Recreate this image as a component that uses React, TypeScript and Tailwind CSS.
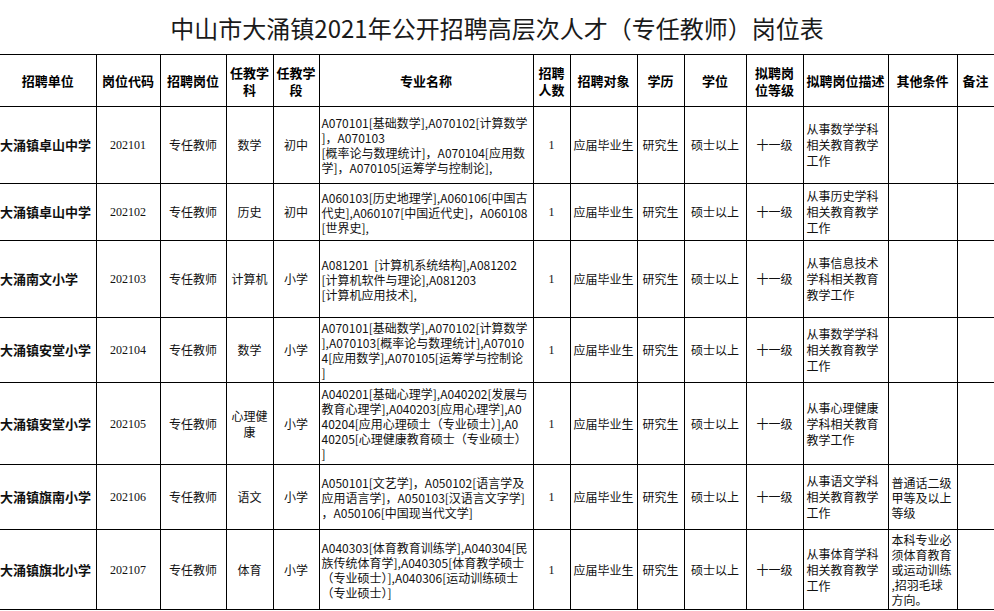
import React from 'react';

type Row = {
  unit: string;
  code: string;
  subject: string[];
  stage: string;
  major: string[];
  desc: string[];
  other?: string[];
  h: string;
};

const rows: Row[] = [
  {
    unit: '大涌镇卓山中学',
    code: '202101',
    subject: ['数学'],
    stage: '初中',
    major: [
      'A070101[基础数学],A070102[计算数学',
      ']，A070103',
      '[概率论与数理统计]，A070104[应用数',
      '学]，A070105[运筹学与控制论],',
    ],
    desc: ['从事数学学科', '相关教育教学', '工作'],
    h: 'h-[77px]',
  },
  {
    unit: '大涌镇卓山中学',
    code: '202102',
    subject: ['历史'],
    stage: '初中',
    major: ['A060103[历史地理学],A060106[中国古', '代史],A060107[中国近代史]，A060108', '[世界史],'],
    desc: ['从事历史学科', '相关教育教学', '工作'],
    h: 'h-[57px]',
  },
  {
    unit: '大涌南文小学',
    code: '202103',
    subject: ['计算机'],
    stage: '小学',
    major: ['A081201  [计算机系统结构],A081202', '[计算机软件与理论],A081203', '[计算机应用技术],'],
    desc: ['从事信息技术', '学科相关教育', '教学工作'],
    h: 'h-[77px]',
  },
  {
    unit: '大涌镇安堂小学',
    code: '202104',
    subject: ['数学'],
    stage: '小学',
    major: [
      'A070101[基础数学],A070102[计算数学',
      '],A070103[概率论与数理统计],A07010',
      '4[应用数学],A070105[运筹学与控制论',
      ']',
    ],
    desc: ['从事数学学科', '相关教育教学', '工作'],
    h: 'h-[65px]',
  },
  {
    unit: '大涌镇安堂小学',
    code: '202105',
    subject: ['心理健', '康'],
    stage: '小学',
    major: [
      'A040201[基础心理学],A040202[发展与',
      '教育心理学],A040203[应用心理学],A0',
      '40204[应用心理硕士（专业硕士）],A0',
      '40205[心理健康教育硕士（专业硕士）',
      ']',
    ],
    desc: ['从事心理健康', '学科相关教育', '教学工作'],
    h: 'h-[82px]',
  },
  {
    unit: '大涌镇旗南小学',
    code: '202106',
    subject: ['语文'],
    stage: '小学',
    major: ['A050101[文艺学]，A050102[语言学及', '应用语言学]，A050103[汉语言文字学]', '，A050106[中国现当代文学]'],
    desc: ['从事语文学科', '相关教育教学', '工作'],
    other: ['普通话二级', '甲等及以上', '等级'],
    h: 'h-[65px]',
  },
  {
    unit: '大涌镇旗北小学',
    code: '202107',
    subject: ['体育'],
    stage: '小学',
    major: [
      'A040303[体育教育训练学],A040304[民',
      '族传统体育学],A040305[体育教学硕士',
      '（专业硕士）],A040306[运动训练硕士',
      '（专业硕士）]',
    ],
    desc: ['从事体育学科', '相关教育教学', '工作'],
    other: ['本科专业必', '须体育教育', '或运动训练', ',招羽毛球', '方向。'],
    h: 'h-[80px]',
  },
];

const Lines: React.FC<{ lines: string[] }> = ({ lines }) => (
  <>
    {lines.map((l, i) => (
      <div key={i} className="whitespace-pre">
        {l}
      </div>
    ))}
  </>
);

const th = 'border border-black text-center align-middle font-bold text-[13px] leading-[17px] text-black p-0';
const td = 'border border-black text-center align-middle text-[12px] text-[#111] p-0';

export default function App() {
  return (
    <div className="w-[994px] h-[611px] overflow-hidden bg-white font-['Noto_Sans_CJK_SC',sans-serif]">
      <div className="h-[54px] flex items-center justify-center text-[24px] text-[#1a1a1a] pt-[2px]">
        中山市大涌镇2021年公开招聘高层次人才（专任教师）岗位表
      </div>
      <table className="table-fixed border-collapse w-[994px]">
        <colgroup>
          <col className="w-[96px]" />
          <col className="w-[64px]" />
          <col className="w-[66px]" />
          <col className="w-[47px]" />
          <col className="w-[46px]" />
          <col className="w-[214px]" />
          <col className="w-[37px]" />
          <col className="w-[67px]" />
          <col className="w-[47px]" />
          <col className="w-[62px]" />
          <col className="w-[57px]" />
          <col className="w-[85px]" />
          <col className="w-[69px]" />
          <col className="w-[37px]" />
        </colgroup>
        <thead>
          <tr className="h-[52px]">
            <th className={`${th} border-l-0`}>招聘单位</th>
            <th className={th}>岗位代码</th>
            <th className={th}>招聘岗位</th>
            <th className={th}>
              任教学
              <br />科
            </th>
            <th className={th}>
              任教学
              <br />段
            </th>
            <th className={th}>专业名称</th>
            <th className={th}>
              招聘
              <br />人数
            </th>
            <th className={th}>招聘对象</th>
            <th className={th}>学历</th>
            <th className={th}>学位</th>
            <th className={th}>
              拟聘岗
              <br />位等级
            </th>
            <th className={`${th} text-[11px]`}>拟聘岗位描述</th>
            <th className={th}>其他条件</th>
            <th className={th}>备注</th>
          </tr>
        </thead>
        <tbody>
          {rows.map((r) => (
            <tr key={r.code} className={r.h}>
              <td className={`${td} border-l-0 text-left font-bold text-[13px] text-[#0d0d1a]`}>{r.unit}</td>
              <td className={`${td} font-['Liberation_Serif',serif] text-[#3a3a4a]`}>{r.code}</td>
              <td className={td}>专任教师</td>
              <td className={`${td} leading-[16px]`}>
                <Lines lines={r.subject} />
              </td>
              <td className={td}>{r.stage}</td>
              <td className={`${td} text-left pl-[2px] leading-[15px] overflow-hidden`}>
                <Lines lines={r.major} />
              </td>
              <td className={`${td} font-['Liberation_Serif',serif]`}>1</td>
              <td className={td}>应届毕业生</td>
              <td className={td}>研究生</td>
              <td className={td}>硕士以上</td>
              <td className={td}>十一级</td>
              <td className={`${td} text-left pl-[3px] leading-[16px]`}>
                <Lines lines={r.desc} />
              </td>
              <td className={`${td} text-left pl-[3px] leading-[15px]`}>
                {r.other ? <Lines lines={r.other} /> : null}
              </td>
              <td className={td}></td>
            </tr>
          ))}
        </tbody>
      </table>
    </div>
  );
}
